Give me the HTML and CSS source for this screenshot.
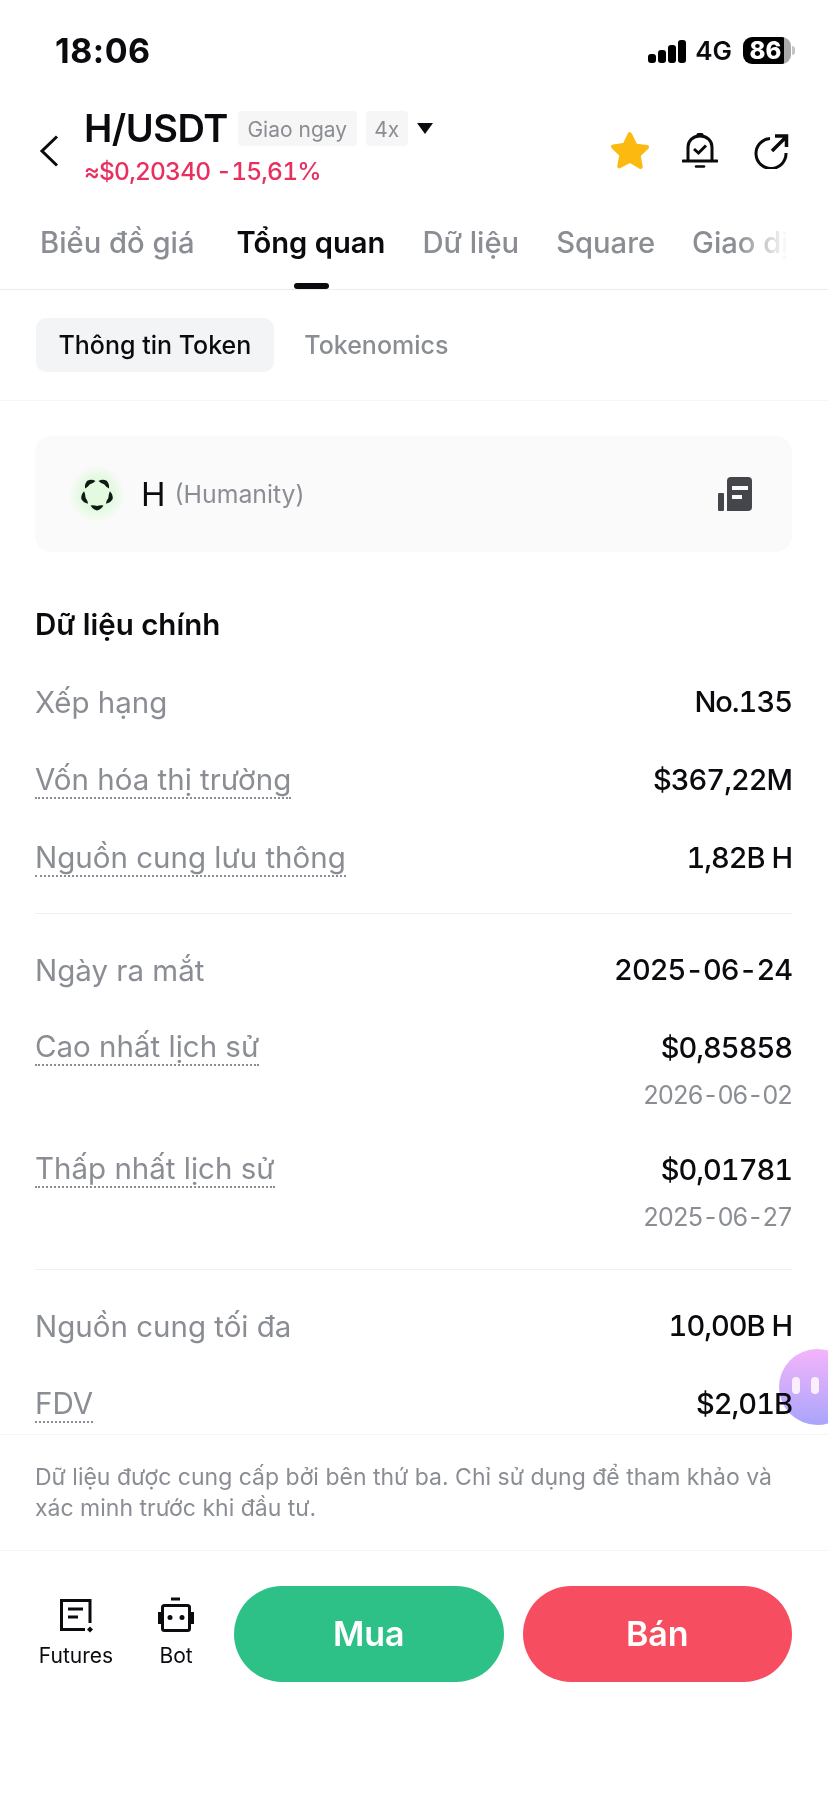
FILE: index.html
```html
<!DOCTYPE html>
<html lang="en">
<head>
  <meta charset="UTF-8">
  <title>H/USDT</title>
  <link rel="stylesheet" href="styles.css">
</head>
<body>
<div class="page">

  <div class="status">
    <span class="time">18:06</span>
    <div class="status-right">
      <div class="signal"><i class="b1"></i><i class="b2"></i><i class="b3"></i><i class="b4"></i></div>
      <span class="net">4G</span>
      <div class="battery">86</div>
      <span class="battery-tip"></span>
    </div>
  </div>

  <div class="header">
    <svg class="back" width="20" height="32" viewBox="0 0 20 32"><path d="M18 1.5 3 16l15 14.5" fill="none" stroke="#0b0b0f" stroke-width="3"/></svg>
    <div class="title-block">
      <div class="title-row">
        <span class="pair">H/USDT</span>
        <span class="tag tag-spot">Giao ngay</span>
        <span class="tag tag-lev">4x</span>
        <span class="caret"></span>
      </div>
      <div class="price">≈$0,20340 -15,61%</div>
    </div>
    <div class="header-icons">
      <svg width="40" height="38" viewBox="0 0 40 38"><path d="M20 1.5c1 0 1.700.6 2.200 1.700l4.600 9.500 10.200 1.400c2 .3 2.700 2.300 1.300 3.700l-7.500 7.300 1.900 10.300c.3 2-1.500 3.200-3.200 2.300L20 32l-9.500 5.100c-1.700.9-3.500-.3-3.200-2.300l1.900-10.300-7.500-7.300c-1.400-1.400-.7-3.400 1.300-3.700l10.200-1.400 4.600-9.500c.5-1.100 1.200-1.700 2.200-1.700z" fill="#fcb90f" transform="translate(0 -1)"/></svg>
      <svg width="36" height="38" viewBox="0 0 36 38" fill="none" stroke="#0b0b0f" stroke-width="3">
        <path d="M6 28V15C6 8.500 11 4 18 4s12 4.500 12 11v13"/>
        <path d="M1 29h34" stroke-linecap="round"/>
        <path d="M16 2.500h4" stroke-linecap="round"/>
        <path d="m12 17 4.500 4L24 13.500"/>
        <path d="M14 34.500h8" stroke-width="2.500" stroke-linecap="round"/>
      </svg>
      <svg class="share" width="36" height="36" viewBox="0 0 36 36" fill="none" stroke="#0b0b0f" stroke-width="3">
        <path d="M17 5.500A15 15 0 1 0 33 20"/>
        <path d="m19 18 13-13M22 3h11.500v11" stroke-width="3.500"/>
      </svg>
    </div>
  </div>

  <div class="tabs">
    <span class="tab">Biểu đồ giá</span>
    <span class="tab active">Tổng quan</span>
    <span class="tab">Dữ liệu</span>
    <span class="tab">Square</span>
    <span class="tab">Giao dịch</span>
  </div>

  <div class="subtabs">
    <span class="subtab active">Thông tin Token</span>
    <span class="subtab">Tokenomics</span>
  </div>

  <div class="content">
    <div class="token-card">
      <div class="token-logo">
        <svg width="34" height="34" viewBox="0 0 34 34">
          <g fill="#0f1a12">
            <path d="M10.500 28.500q3.500-.5 6.500.5q3-1 6.500-.5q-2 4-6.500 5q-4.500-1-6.500-5z"/>
            <path d="M10.500 28.500q3.500-.5 6.500.5q3-1 6.500-.5q-2 4-6.500 5q-4.500-1-6.500-5z" transform="rotate(72 17 17)"/>
            <path d="M10.500 28.500q3.500-.5 6.500.5q3-1 6.500-.5q-2 4-6.500 5q-4.500-1-6.500-5z" transform="rotate(144 17 17)"/>
            <path d="M10.500 28.500q3.500-.5 6.500.5q3-1 6.500-.5q-2 4-6.500 5q-4.500-1-6.500-5z" transform="rotate(216 17 17)"/>
            <path d="M10.500 28.500q3.500-.5 6.500.5q3-1 6.500-.5q-2 4-6.500 5q-4.500-1-6.500-5z" transform="rotate(288 17 17)"/>
          </g>
        </svg>
      </div>
      <span class="token-sym">H</span>
      <span class="token-name">(Humanity)</span>
      <svg class="token-doc" width="34" height="34" viewBox="0 0 34 34">
        <rect x="0" y="16" width="6" height="18" rx="1" fill="#44464c"/>
        <path d="M13 0h17a4 4 0 0 1 4 4v26a4 4 0 0 1-4 4H9V4a4 4 0 0 1 4-4z" fill="#44464c"/>
        <rect x="14" y="9" width="16" height="4" fill="#fafafa"/>
        <rect x="14" y="18" width="10" height="4" fill="#fafafa"/>
      </svg>
    </div>

    <h2 class="section-title">Dữ liệu chính</h2>

    <div class="group">
      <div class="row"><span class="label">Xếp hạng</span><span class="value">No.135</span></div>
      <div class="row"><span class="label dotted">Vốn hóa thị trường</span><span class="value">$367,22M</span></div>
      <div class="row"><span class="label dotted">Nguồn cung lưu thông</span><span class="value">1,82B H</span></div>
    </div>

    <div class="group">
      <div class="row"><span class="label">Ngày ra mắt</span><span class="value">2025-06-24</span></div>
      <div class="row row-sub">
        <span class="label dotted">Cao nhất lịch sử</span>
        <div class="value-stack"><span class="value">$0,85858</span><span class="sub">2026-06-02</span></div>
      </div>
      <div class="row row-sub">
        <span class="label dotted">Thấp nhất lịch sử</span>
        <div class="value-stack"><span class="value">$0,01781</span><span class="sub">2025-06-27</span></div>
      </div>
    </div>

    <div class="group">
      <div class="row"><span class="label">Nguồn cung tối đa</span><span class="value">10,00B H</span></div>
      <div class="row"><span class="label dotted">FDV</span><span class="value">$2,01B</span></div>
    </div>

    <div class="blob"><i></i><i></i></div>
  </div>

  <div class="note">Dữ liệu được cung cấp bởi bên thứ ba. Chỉ sử dụng để tham khảo và xác minh trước khi đầu tư.</div>

  <div class="actions">
    <div class="tool tool-futures">
      <svg width="36" height="36" viewBox="0 0 36 36" fill="none" stroke="#0b0b0f" stroke-width="3">
        <path d="M32 26V3.500H3.500v29H27"/>
        <path d="M10 12h15M10 20h10"/>
        <path d="m32 29.500 3 3-3 3-3-3z" fill="#0b0b0f" stroke="none"/>
      </svg>
      <span>Futures</span>
    </div>
    <div class="tool tool-bot">
      <svg width="36" height="36" viewBox="0 0 36 36" fill="none" stroke="#0b0b0f" stroke-width="3">
        <path d="M13 2h9"/>
        <rect x="4.500" y="8.500" width="27" height="25" rx="2"/>
        <path d="M1.500 15v12M34.500 15v12"/>
        <circle cx="12" cy="20.500" r="2.500" fill="#0b0b0f" stroke="none"/>
        <circle cx="24" cy="20.500" r="2.500" fill="#0b0b0f" stroke="none"/>
      </svg>
      <span>Bot</span>
    </div>
    <div class="btn btn-buy">Mua</div>
    <div class="btn btn-sell">Bán</div>
  </div>

</div>
</body>
</html>
```

FILE: styles.css
```css
* {
  box-sizing: border-box;
}

body {
  margin: 0;
  background: white;
  font-family: Inter, "Noto Sans", sans-serif;
  color: #0b0b0f;
}

.page {
  width: 828px;
  height: 1793px;
  overflow: hidden;
  display: flex;
  flex-direction: column;
}

/* status bar */
.status {
  height: 102px;
  padding: 0 33px 0 55px;
  display: flex;
  justify-content: space-between;
  align-items: flex-start;
}

.time {
  margin-top: 31px;
  font-size: 34px;
  line-height: 40px;
  font-weight: 700;
  letter-spacing: 0.5px;
}

.status-right {
  margin-top: 37px;
  height: 27px;
  display: flex;
  align-items: center;
}

.signal {
  display: flex;
  align-items: flex-end;
  gap: 2px;
  height: 24px;
  margin-right: 9px;
}

.signal i {
  display: block;
  width: 8px;
  border-radius: 3px;
  background: black;
}

.signal .b1 { height: 9px; }
.signal .b2 { height: 13px; }
.signal .b3 { height: 18px; }
.signal .b4 { height: 23px; }

.net {
  font-size: 26px;
  font-weight: 600;
  margin-right: 11px;
}

.battery {
  width: 48px;
  height: 27px;
  border-radius: 9px;
  background: linear-gradient(90deg, black 85%, #a9a9ab 85%);
  color: white;
  font-size: 24px;
  line-height: 27px;
  font-weight: 800;
  text-align: center;
  padding-right: 3px;
}

.battery-tip {
  width: 3px;
  height: 9px;
  margin-left: 1px;
  border-radius: 0 3px 3px 0;
  background: #c4c4c6;
}

/* header */
.header {
  height: 88px;
  padding: 0 39px 0 39px;
  display: flex;
  align-items: flex-start;
}

.back {
  margin: 33px 25px 0 0;
  flex: none;
}

.title-block {
  flex: 1;
  margin-top: 8px;
}

.title-row {
  display: flex;
  align-items: center;
  height: 36px;
}

.pair {
  font-size: 38px;
  line-height: 36px;
  font-weight: 600;
  letter-spacing: -0.5px;
  margin-right: 10px;
}

.tag {
  height: 35px;
  line-height: 37px;
  font-size: 21px;
  color: #8a8d93;
  background: #f6f6f6;
  border-radius: 4px;
  text-align: center;
}

.tag-spot {
  width: 119px;
  margin-right: 9px;
}

.tag-lev {
  width: 42px;
  margin-right: 9px;
}

.caret {
  width: 0;
  height: 0;
  border-left: 8px solid transparent;
  border-right: 8px solid transparent;
  border-top: 11px solid #0b0b0f;
}

.price {
  margin-top: 10px;
  font-size: 24.500px;
  line-height: 30px;
  font-weight: 500;
  font-variant-numeric: tabular-nums;
  letter-spacing: -0.8px;
  color: #e8305f;
}

.header-icons {
  display: flex;
  align-items: center;
  gap: 32px;
  margin-top: 30px;
}

.share {
  margin-left: 3px;
}

/* tabs */
.tabs {
  height: 100px;
  padding: 33px 40px 0;
  border-bottom: 1px solid #ececec;
  display: flex;
  gap: 37px;
  overflow: hidden;
  white-space: nowrap;
  position: relative;
}

.tabs::after {
  content: "";
  position: absolute;
  top: 0;
  right: 40px;
  bottom: 0;
  width: 50px;
  background: linear-gradient(90deg, rgba(255,255,255,0), white);
}

.tabs::before {
  content: "";
  position: absolute;
  top: 0;
  right: 0;
  bottom: 0;
  width: 40px;
  background: white;
  z-index: 1;
}

.tab {
  position: relative;
  height: 66px;
  font-size: 29.200px;
  line-height: 40px;
  font-weight: 500;
  color: #8a8d93;
}

.tab.active {
  margin-left: 5px;
  color: #0b0b0f;
  font-weight: 600;
}

.tab.active::after {
  content: "";
  position: absolute;
  left: 50%;
  bottom: 0;
  width: 35px;
  height: 6px;
  margin-left: -17px;
  border-radius: 3px;
  background: #0b0b0f;
}

/* sub tabs */
.subtabs {
  height: 111px;
  padding: 28px 36px 0;
  border-bottom: 1px solid #f5f5f5;
  display: flex;
  align-items: flex-start;
  gap: 8px;
}

.subtab {
  height: 54px;
  padding: 0 22.500px;
  font-size: 25px;
  line-height: 54px;
  font-weight: 500;
  color: #8a8d93;
  border-radius: 10px;
}

.subtab.active {
  background: #f3f4f6;
  color: #0b0b0f;
}

/* main content */
.content {
  height: 1033px;
  padding: 35px 36px 0 35px;
  overflow: hidden;
  position: relative;
}

.token-card {
  height: 116px;
  padding: 0 40px 0 34px;
  border-radius: 16px;
  background: #fafafa;
  display: flex;
  align-items: center;
}

.token-logo {
  width: 56px;
  height: 56px;
  margin-right: 16px;
  border-radius: 50%;
  background: radial-gradient(circle, #e3f9e0 40%, rgba(236,250,232,0) 72%);
  display: flex;
  align-items: center;
  justify-content: center;
}

.token-sym {
  font-size: 33px;
  margin-right: 9px;
}

.token-name {
  font-size: 24.800px;
  color: #8a8d93;
}

.token-doc {
  margin-left: auto;
}

.section-title {
  margin: 51px 0 18px;
  font-size: 29.500px;
  line-height: 42px;
  font-weight: 600;
}

.group {
  padding-bottom: 16px;
  margin-bottom: 17px;
  border-bottom: 1px solid #f0f0f0;
}

.group:last-of-type {
  border-bottom: none;
}

.row {
  height: 78px;
  display: flex;
  justify-content: space-between;
  align-items: center;
}

.row-sub {
  height: 122px;
  align-items: flex-start;
  padding-top: 19px;
}

.label {
  font-size: 29.500px;
  line-height: 36px;
  color: #8a8d93;
}

.dotted {
  border-bottom: 2px dotted #8a8d93;
}

.value {
  font-size: 29px;
  line-height: 40px;
  font-weight: 500;
  font-variant-numeric: tabular-nums;
  letter-spacing: -1px;
}

.value-stack {
  display: flex;
  flex-direction: column;
  align-items: flex-end;
}

.sub {
  margin-top: 7px;
  font-size: 25px;
  line-height: 40px;
  font-variant-numeric: tabular-nums;
  letter-spacing: -1.3px;
  color: #8a8d93;
}

.blob {
  position: absolute;
  top: 948px;
  left: 779px;
  width: 76px;
  height: 76px;
  border-radius: 50%;
  background: linear-gradient(180deg, #f4b4fb, #a9a5fb);
  mix-blend-mode: multiply;
  display: flex;
  gap: 11px;
  padding: 28px 0 0 13px;
}

.blob i {
  display: block;
  width: 8px;
  height: 17px;
  border-radius: 4px;
  background: #fbeefd;
}

/* footer */
.note {
  height: 117px;
  padding: 27px 35px 0;
  border-top: 1px solid #f5f5f5;
  border-bottom: 1px solid #f5f5f5;
  font-size: 23px;
  line-height: 31px;
  color: #8a8d93;
}

.actions {
  padding: 35px 36px 0 39px;
  display: flex;
  align-items: flex-start;
}

.tool {
  display: flex;
  flex-direction: column;
  align-items: center;
  margin-top: 11px;
  font-size: 21px;
  line-height: 26px;
}

.tool svg {
  margin-bottom: 10px;
}

.tool-futures {
  width: 74px;
  margin-right: 46px;
}

.tool-bot {
  width: 34px;
  margin-right: 41px;
}

.btn {
  width: 270px;
  height: 96px;
  border-radius: 48px;
  color: white;
  font-size: 34px;
  line-height: 96px;
  font-weight: 600;
  text-align: center;
}

.btn-buy {
  background: #2dc187;
  margin-right: 19px;
}

.btn-sell {
  background: #f74d60;
}
```
